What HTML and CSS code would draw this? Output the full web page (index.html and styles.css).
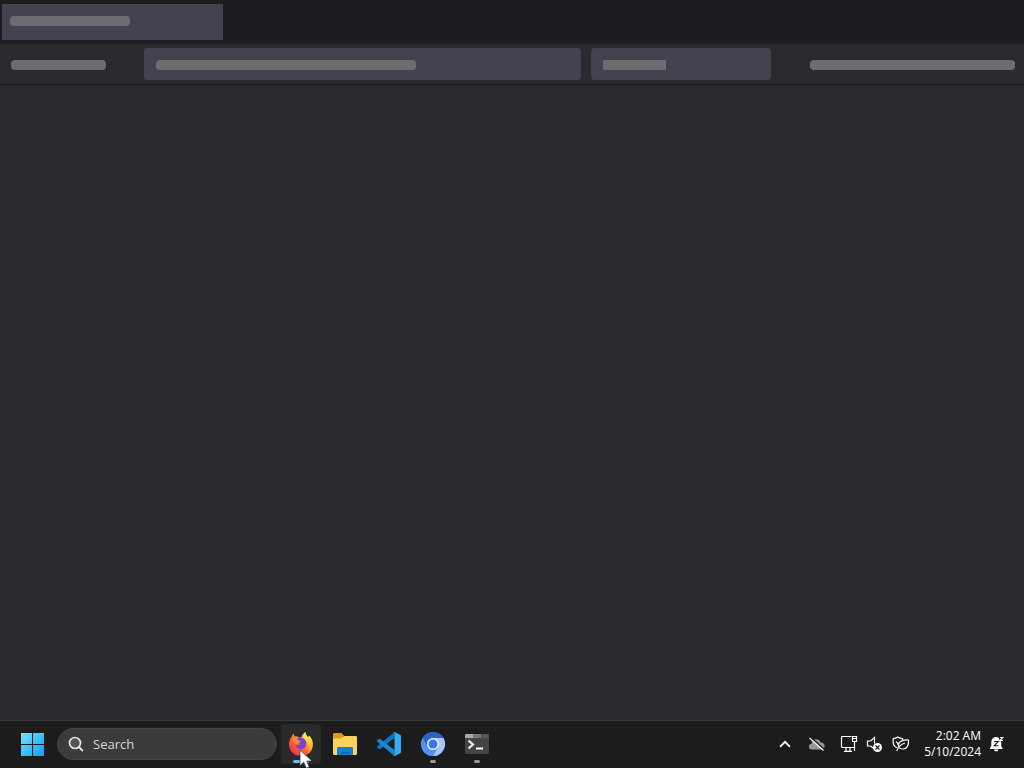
FILE: index.html
```html
<!DOCTYPE html>
<html lang="en">
<head>
<meta charset="utf-8">
<meta name="viewport" content="width=device-width, initial-scale=1">
<title>Desktop</title>
<link rel="stylesheet" href="styles.css">
</head>
<body>
<main class="browser">
  <div class="tab-strip"><div class="tab"><span class="bar bar-tab"></span></div></div>
  <div class="toolbar">
    <div class="tools-left"><span class="bar"></span></div>
    <div class="field field-url"><span class="bar bar-url"></span></div>
    <div class="field field-find"><span class="bar bar-find"></span></div>
    <div class="tools-right"><span class="bar"></span></div>
  </div>
  <div class="content"></div>
</main>
<footer class="taskbar">
  <button class="task start" aria-label="Start">
    <svg width="24" height="24" viewBox="0 0 24 24">
      <defs><linearGradient id="win" x1="0" y1="0" x2="24" y2="24" gradientUnits="userSpaceOnUse"><stop offset="0" stop-color="#7be6ff"/><stop offset=".5" stop-color="#3cc1fb"/><stop offset="1" stop-color="#159cec"/></linearGradient></defs>
      <path fill="url(#win)" d="M0 1h11v11H0zM12 1h11v11H12zM0 13h11v11H0zM12 13h11v11H12z"/>
    </svg>
  </button>
  <label class="search">
    <svg width="18" height="18" viewBox="0 0 18 18" fill="none"><circle cx="8" cy="8" r="5.500" fill="#555" stroke="#e4e4e4" stroke-width="1.700"/><path d="M12 12l3.200 3.400" stroke="#e4e4e4" stroke-width="2" stroke-linecap="round"/></svg>
    <input class="search-input" type="text" placeholder="Search" aria-label="Search">
  </label>
  <button class="task active" aria-label="Firefox">
    <svg width="26" height="26" viewBox="0 0 26 26">
      <defs>
        <linearGradient id="fox" x1="22" y1="3" x2="5" y2="23" gradientUnits="userSpaceOnUse"><stop offset="0" stop-color="#fff44f"/><stop offset=".3" stop-color="#ffb82e"/><stop offset=".6" stop-color="#ff6634"/><stop offset="1" stop-color="#f52a58"/></linearGradient>
        <linearGradient id="flame" x1="18" y1="1" x2="21" y2="22" gradientUnits="userSpaceOnUse"><stop offset="0" stop-color="#fff35a"/><stop offset=".5" stop-color="#ffcf36"/><stop offset="1" stop-color="#ff8b2c"/></linearGradient>
      </defs>
      <path fill="url(#fox)" d="M3.500 6l1.800-3.500 1.500 3.200C8 5 9.200 5.200 10.500 6.500h3C14 4 15.500 2.200 17.500 1c0 2.200 1 3.700 2.500 5.300l1.300-1.600c2.600 2.800 3.600 6 3.400 9.500C24.300 20.500 19.500 25 13 25S1.300 20.300 1 14c-.2-3 .7-5.800 2.500-8z"/>
      <path fill="url(#flame)" d="M17.500 1c0 2.200 1 3.700 2.500 5.300l1.300-1.600c2.600 2.800 3.600 6 3.400 9.500-.3 3.700-2 6.500-4.600 8.600 1.600-3.800 1.400-8.800-1.300-12-2.300-2-5.300-4.800-1.300-9.800z"/>
      <path fill="#7545cf" d="M8 8.500C10 6.500 13 6.300 15.500 7.500c2.600 1.400 3.400 4.500 2.600 6.900-.8 2.500-3 3.600-5.400 3.600-3 0-5-1.800-5-4.300 1.700.7 3.300.3 5-.7-1.600-.7-3.200-1.700-4.700-4.500z"/>
      <path fill="#ff8a32" d="M4 8c1.700-1.500 3.800-1.600 5.400-.8-.4.900-.2 1.600.6 2.100l3 .4c-.2 1-1.300 1.600-2.500 2-.8.300-.6 1.300-.6 1.300-3 .8-4.900-.7-5.900-5z"/>
    </svg>
    <span class="mark mark-active"></span>
  </button>
  <button class="task" aria-label="File Explorer">
    <svg width="26" height="24" viewBox="0 0 26 24">
      <path fill="#dc9c18" d="M1 2.500C1 1.500 1.600 1 2.500 1h6.800L12 3.500 9 8H1z"/>
      <path fill="#ffd35b" d="M1 6.500h8l3-2.500h11.500c1 0 1.500.6 1.500 1.500v16c0 .9-.5 1.500-1.500 1.500h-21C1.600 23 1 22.400 1 21.500z"/>
      <path fill="#1680d3" d="M5 23v-6.500c0-1 .6-1.500 1.500-1.500h13c1 0 1.500.5 1.500 1.500V23z"/><path fill="#0b62b5" d="M9 20h8v1.500H9z"/>
    </svg>
  </button>
  <button class="task" aria-label="Visual Studio Code">
    <svg width="26" height="26" viewBox="0 0 26 26">
      <path fill="#0879c1" d="M1.200 16.400l1.700 1.500c.4.300.9.300 1.300 0L18.500 7V1L1.300 15.300c-.4.300-.4.800-.1 1.100z"/>
      <path fill="#168bd0" d="M1.200 9.600l1.700-1.500c.4-.3.900-.3 1.300 0L18.500 19v6L1.300 10.700c-.4-.3-.4-.8-.1-1.100z"/>
      <path fill="#38acef" d="M18.500 1l5.600 2.700c.6.300.9.800.9 1.400v15.800c0 .6-.3 1.100-.9 1.400L18.500 25c-.7.300-1.200.1-1.700-.4.700.4 1.700 0 1.700-1V2.400c0-1-1-1.500-1.700-.9.500-.6 1-.8 1.700-.5z"/>
    </svg>
  </button>
  <button class="task" aria-label="Chromium">
    <svg width="26" height="26" viewBox="0 0 26 26">
      <circle cx="13" cy="13" r="12" fill="#4388ec"/><path fill="#a9c7fa" d="M13 7h10.400A12 12 0 0 1 13 25l5.200-9z"/><path fill="#2b62cf" d="M2.600 7A12 12 0 0 1 23.400 7H13l-5.200 9z"/><path fill="#558ff1" d="M2.600 7l5.200 9 10.400 0L13 25A12 12 0 0 1 2.600 7z"/>
      <circle cx="13" cy="13" r="6" fill="#f0f5ff"/><circle cx="13" cy="13" r="4.500" fill="#3478e5"/>
    </svg>
    <span class="mark"></span>
  </button>
  <button class="task" aria-label="Terminal">
    <svg width="26" height="22" viewBox="0 0 26 22">
      <rect x="1" y="1" width="24" height="20" rx="1.500" fill="#444"/><path fill="#aaa" d="M1 5V2.500C1 1.500 1.600 1 2.500 1H9v4z"/><path fill="#777" d="M9 1h8v4H9z"/><path fill="#555" d="M17 1h6.500c1 0 1.500.5 1.500 1.500V5h-8z"/>
      <path d="M4.500 7.500L9 11.500l-4.500 4" fill="none" stroke="#eee" stroke-width="2.200"/><path fill="#fff" d="M12 14.500h7v2h-7z"/>
    </svg>
    <span class="mark"></span>
  </button>
  <div class="tray">
    <button class="tray-item" aria-label="Show hidden icons"><svg width="16" height="16" viewBox="0 0 16 16"><path d="M3.500 10.300L8 5.800l4.500 4.500" fill="none" stroke="#fff" stroke-width="1.700" stroke-linecap="round"/></svg></button>
    <button class="tray-item" aria-label="OneDrive"><svg width="18" height="16" viewBox="0 0 18 16"><path fill="#999" d="M4 13.500c-4.200 0-4-5.300-.5-5.800C4.300 2.300 11 1.500 12.600 6.500c5-.4 5.400 7 .7 7z"/><path d="M3 1.500L17 14" stroke="#1c1c1c" stroke-width="1.500"/><path d="M1.500 2L15.500 14.500" stroke="#eee" stroke-width="1.300"/></svg></button>
    <button class="tray-status" aria-label="Network, volume and security">
      <svg width="18" height="18" viewBox="0 0 18 18" fill="none" stroke="#fff" stroke-width="1.200"><path d="M11.500 1.500h-9c-.7 0-1 .3-1 1v9c0 .7.300 1 1 1h11.500M6 12.500V16M10 12.500V16M4 16.400h8M12.500 1.500h4v5h-4zM14.500 6.500v9.500M13 3.500h3"/></svg>
      <svg width="18" height="18" viewBox="0 0 18 18"><path d="M8.500 12.200V14L4.500 11H1.500V6h3l4-3.500v6" fill="none" stroke="#fff" stroke-width="1.200"/><circle cx="11.500" cy="12.500" r="4.500" fill="#fff"/><path d="M9.500 10.500l4 4m0-4l-4 4" stroke="#222" stroke-width="1.200"/></svg>
      <svg width="18" height="18" viewBox="0 0 18 18" fill="none" stroke="#fff" stroke-width="1.200"><path d="M10.500 5V3.500C8.500 3.500 7 3 5.800 2 4.500 3 3 3.500 1.200 3.500v4c0 2.500 1.400 4.300 4 5.300M7 12.500C5 7.500 9 4.500 16.500 5c.5 5-1.500 9-5.500 9-2 0-3.500-.5-4-1.500zM4.800 16c1.200-4 4-6.500 8-8M4 6.500c1.200.8 2 2 2.300 3.500"/></svg>
    </button>
    <button class="clock"><span class="clock-text"><time>2:02 AM</time><time datetime="2024-05-10">5/10/2024</time></span>
      <svg width="16" height="18" viewBox="0 0 16 18"><path fill="#fff" d="M7 2C3.800 2 2.300 4.500 2.300 7.500V11L1 13v1h12.500v-1l-1.300-2V7.500C12.200 4.500 10 2 7 2zM5 14.500c.5 2.500 4 2.500 4.500 0z"/><path d="M5.200 6.500h4L5.200 10.800h4.300" fill="none" stroke="#1b1b1b" stroke-width="1.100"/><path d="M10.300 2v4.300h4.700V2z" fill="#1b1b1b"/><path d="M11 2.500h2.800L11 5.500h3" fill="none" stroke="#fff" stroke-width="1.100"/></svg>
    </button>
  </div>
</footer>
<svg class="cursor" width="15" height="21" viewBox="0 0 15 21"><path d="M1 .8v16l3.700-3.600 2.600 6 3-1.300-2.600-5.800H13z" fill="#fff" stroke="#333" stroke-width=".8"/></svg>
</body>
</html>
```
FILE: styles.css
```css
* { box-sizing: border-box; }
body {
  margin: 0;
  min-height: 100vh;
  display: flex;
  flex-direction: column;
  overflow: hidden;
  background: #2b2a2f;
  color: #fff;
  font-family: "Open Sans", "Noto Sans", sans-serif;
}
button {
  border: 0;
  padding: 0;
  background: none;
  color: inherit;
  font: inherit;
}
svg { display: block; flex: none; }

.browser { flex: 1; display: flex; flex-direction: column; }
.tab-strip { height: 44px; padding: 4px 2px; background: #1c1b20; }
.tab { width: 221px; height: 36px; padding: 12px 8px; background: #454250; }
.bar { display: block; height: 10px; border-radius: 4px; background: #6d6c70; }
.bar-tab { width: 120px; }
.toolbar {
  height: 41px;
  display: flex;
  align-items: center;
  border-bottom: 1px solid #19181d;
  background: #2b2a2f;
}
.tools-left { width: 144px; padding: 2px 38px 0 11px; }
.tools-right { width: 253px; padding: 2px 9px 0 39px; }
.field { height: 32px; padding: 12px; border-radius: 4px; background: #454250; }
.field-url { flex: 1; margin-right: 10px; }
.field-find { width: 180px; }
.bar-url { width: 260px; }
.bar-find { width: 63px; border-radius: 1px; }
.content { flex: 1; }

.taskbar {
  height: 48px;
  display: flex;
  align-items: center;
  gap: 4px;
  padding: 0 11px 1px 13px;
  border-top: 1px solid #38373b;
  background: #1c1c1c;
}
.task {
  position: relative;
  width: 40px;
  height: 40px;
  display: flex;
  align-items: center;
  justify-content: center;
  border-radius: 4px;
}
.active { background: #2a2a2a; }
.mark {
  position: absolute;
  bottom: 1px;
  left: 17px;
  width: 6px;
  height: 3px;
  border-radius: 2px;
  background: #999;
}
.mark-active { left: 12px; width: 16px; background: #60bff0; }
.search {
  width: 220px;
  height: 32px;
  display: flex;
  align-items: center;
  gap: 8px;
  padding: 0 9px;
  border: 1px solid #444;
  border-radius: 16px;
  background: #3b3b3b;
}
.search-input {
  flex: 1;
  min-width: 0;
  border: 0;
  padding: 0;
  outline: 0;
  background: none;
  color: #fff;
  font: 13px/20px "Open Sans", "Noto Sans", sans-serif;
}
.search-input::placeholder { color: #d6d6d6; opacity: 1; }

.tray { margin-left: auto; display: flex; align-items: center; }
.tray-item { width: 32px; height: 40px; display: flex; align-items: center; justify-content: center; }
.tray-status { height: 40px; display: flex; align-items: center; gap: 8px; padding: 0 7px; }
.clock { height: 40px; display: flex; align-items: center; gap: 8px; padding: 0 8px 0 7px; }
.clock-text { display: flex; flex-direction: column; text-align: right; font-size: 12px; line-height: 16px; }

.cursor { position: absolute; left: 299px; top: 749px; }
```
